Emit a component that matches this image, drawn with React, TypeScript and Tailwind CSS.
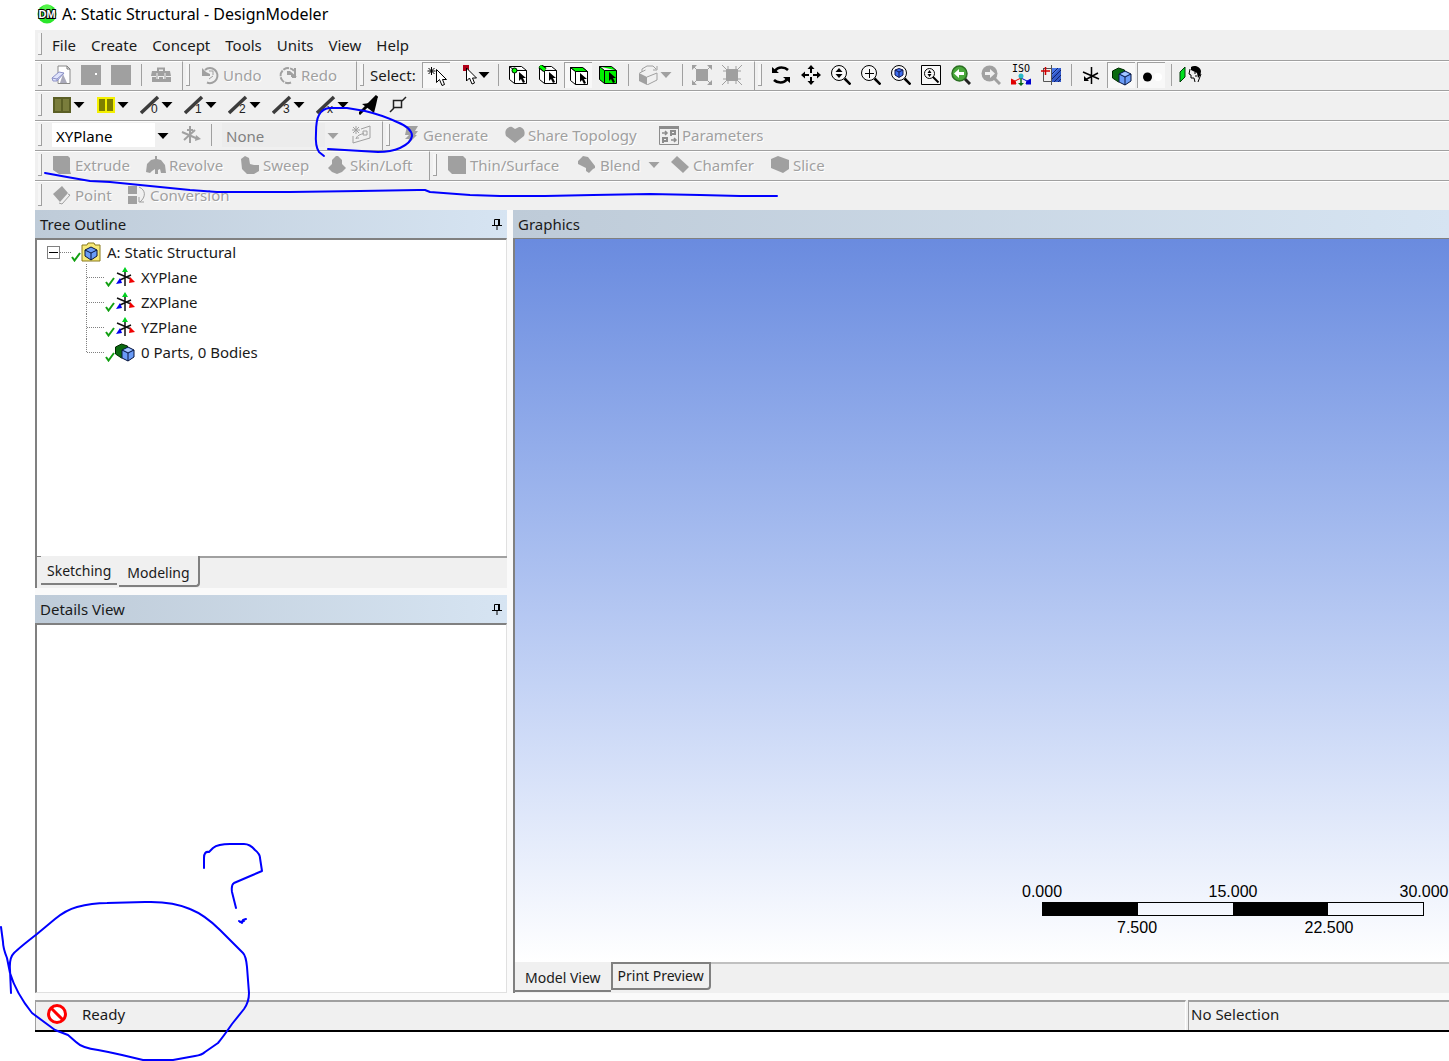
import React, { useState } from "react";

// --- Types ---
type IconProps = { className?: string };
type IconType = React.FC<IconProps>;

type TreeItem = {
  id: string;
  label: string;
  icon: IconType;
};

// --- Icon base ---
const Svg: React.FC<{ children: React.ReactNode; className?: string }> = ({
  children,
  className = "h-5 w-5",
}) => (
  <svg viewBox="0 0 20 20" className={`shrink-0 ${className}`} fill="none" aria-hidden="true">
    {children}
  </svg>
);

const Arrow: React.FC<{ color?: string }> = ({ color = "#000" }) => (
  <svg viewBox="0 0 12 6" className="h-1.5 w-3 shrink-0" aria-hidden="true">
    <path d="M0.5 0h11L6 6z" fill={color} />
  </svg>
);

// --- Standard toolbar icons ---
const LogoIcon: IconType = () => (
  <Svg>
    <circle cx="10" cy="10" r="9.5" fill="#2be62b" />
    <circle cx="10" cy="5" r="5" fill="#7dff6a" opacity="0.5" />
    <text
      x="10"
      y="14"
      textAnchor="middle"
      fontFamily="Liberation Sans, sans-serif"
      fontWeight="bold"
      fontSize="11"
      fill="#fff"
      stroke="#000"
      strokeWidth="2"
      paintOrder="stroke"
    >
      DM
    </text>
  </Svg>
);

const NewIcon: IconType = () => (
  <Svg>
    <path d="M7 1h9l3 3v14.5H7z" fill="#fff" stroke="#8a8a8a" />
    <path d="M16 1v3h3" stroke="#777" />
    <path d="M12 9l4 9H9z" fill="#aab" />
    <path d="M1 13l7-6 5 1-7 8H2z" fill="#dfe3fb" stroke="#8d92c8" />
    <path d="M1 13l5 1 7-6M6 14v2" stroke="#8d92c8" />
  </Svg>
);

const SaveBlockIcon: IconType = () => (
  <Svg>
    <path d="M0 0h20v20H0z" fill="#a0a0a0" />
    <path d="M14 8h2v2h-2z" fill="#fff" />
  </Svg>
);

const BlockIcon: IconType = () => (
  <Svg>
    <path d="M0 0h20v20H0z" fill="#a0a0a0" />
  </Svg>
);

const ToolboxIcon: IconType = () => (
  <Svg>
    <path d="M7 6V3.5h6V6" stroke="#a0a0a0" strokeWidth="2" />
    <path d="M1 6h18l1 5H0zM1 12h4v2h3v-2h4v2h3v-2h5v5H1z" fill="#a0a0a0" />
    <path d="M5 8v6h2V8zM13 8v6h2V8z" fill="#c8c8c8" />
  </Svg>
);

const UndoIcon: IconType = () => (
  <Svg>
    <path d="M5 5a7.5 7.5 0 1 1 2 12.500" stroke="#a0a0a0" strokeWidth="2" />
    <path d="M2 3v8h8V9L6 7z" fill="#a0a0a0" />
    <path d="M9 6h4v4M9 14l4-3" stroke="#a0a0a0" />
  </Svg>
);

const RedoIcon: IconType = () => (
  <Svg>
    <path
      d="M13 17.5a7.5 7.5 0 1 1 3-11.500"
      stroke="#a0a0a0"
      strokeWidth="2"
      strokeDasharray="6 1"
    />
    <path d="M9 6h3l7 6h-6v-2H9z" fill="#a0a0a0" />
    <path d="M17 3v9h-3" stroke="#a0a0a0" strokeWidth="2" />
  </Svg>
);

const SelectNewIcon: IconType = () => (
  <Svg>
    <path d="M4.5 1v8M0.5 5h8M1.5 2l6 6M7.5 2l-6 6" stroke="#000" />
    <path d="M9.5 3.5v13l3-3 2.5 6 2.5-1-2-5h4z" fill="#fff" stroke="#000" />
  </Svg>
);

const SelectModeIcon: IconType = () => (
  <svg viewBox="0 0 14 20" className="h-5 w-3.5 shrink-0" fill="none" aria-hidden="true">
    <path d="M0 0h6v6H0z" fill="#b00018" />
    <path d="M3.5 3v13l3-3 2.5 6 2.5-1-2-5h4z" fill="#fff" stroke="#000" />
  </svg>
);

const cubeFrame = "M1.5 1.5h12l5 4v13h-12l-5-4zM1.5 1.5l5 4h12M6.5 5.5v13";
const blackCursor = "M11 7v9l2-2 2 4 2-1-2-4h3z";

const PickPointIcon: IconType = () => (
  <Svg>
    <path d={cubeFrame} fill="#fff" stroke="#000" />
    <circle cx="6.5" cy="5.5" r="2.5" fill="#0f0" stroke="#000" />
    <path d={blackCursor} fill="#000" />
  </Svg>
);

const PickEdgeIcon: IconType = () => (
  <Svg>
    <path d={cubeFrame} fill="#fff" stroke="#000" />
    <path d="M2 1l5 4" stroke="#000" strokeWidth="5" />
    <path d="M2 1l5 4" stroke="#0f0" strokeWidth="3" />
    <path d={blackCursor} fill="#000" />
  </Svg>
);

const PickFaceIcon: IconType = () => (
  <Svg>
    <path d={cubeFrame} fill="#fff" stroke="#000" />
    <path d="M1.5 1.5h12l5 4h-12z" fill="#00f000" stroke="#000" />
    <path d={blackCursor} fill="#000" />
  </Svg>
);

const PickBodyIcon: IconType = () => (
  <Svg>
    <path d={cubeFrame} fill="#00f000" stroke="#000" />
    <path d={blackCursor} fill="#000" />
  </Svg>
);

const ExtendIcon: IconType = () => (
  <Svg>
    <path d="M0 8l8 4v8l-8-4z" fill="#a0a0a0" />
    <path
      d="M0.5 8l6-3M8 12l10-4v7L8 20M3 7V4l5-3h6l3 3M14 5h4V1"
      stroke="#a0a0a0"
    />
  </Svg>
);

const ExpandIcon: IconType = () => (
  <Svg>
    <path d="M4 4h12v12H4z" fill="#a0a0a0" />
    <path d="M0 5V0h5zM15 0h5v5zM20 15v5h-5zM5 20H0v-5z" fill="#a0a0a0" />
    <path d="M1 1l4 4M19 1l-4 4M19 19l-4-4M1 19l4-4" stroke="#a0a0a0" />
  </Svg>
);

const ShrinkIcon: IconType = () => (
  <Svg>
    <path d="M4 4h12v12H4z" fill="#a0a0a0" />
    <path
      d="M0 0l5 5M20 0l-5 5M20 20l-5-5M0 20l5-5M1 6h5V1M14 1v5h5M19 14h-5v5M6 19v-5H1"
      stroke="#a0a0a0"
    />
  </Svg>
);

const RotateIcon: IconType = () => (
  <Svg>
    <path d="M4 6c3-5 10-4 13-1M16 14c-3 5-10 4-13 1" stroke="#000" strokeWidth="2.5" />
    <path d="M1 2v6h7zM19 18v-6h-7z" fill="#000" />
  </Svg>
);

const PanIcon: IconType = () => (
  <Svg>
    <path d="M10 3v5M10 12v5M3 10h5M12 10h5" stroke="#000" strokeWidth="2" />
    <path
      d="M10 0l3.5 4h-7zM10 20l3.5-4h-7zM0 10l4-3.5v7zM20 10l-4-3.5v7z"
      fill="#000"
    />
  </Svg>
);

const Lens: React.FC<{ children?: React.ReactNode }> = ({ children }) => (
  <Svg>
    <circle cx="8" cy="8" r="7.5" fill="#f8f8f8" stroke="#000" />
    <path d="M13.5 13.5l6 6" stroke="#000" strokeWidth="2.5" />
    {children}
  </Svg>
);

const ZoomIcon: IconType = () => (
  <Lens>
    <path d="M8 3l3.5 4h-7zM8 13l3.5-4h-7z" fill="#000" />
  </Lens>
);

const ZoomBoxIcon: IconType = () => (
  <Lens>
    <path d="M8.5 4v9M4 8.5h9" stroke="#000" />
  </Lens>
);

const ZoomFitIcon: IconType = () => (
  <Lens>
    <path d="M4 5l4-1.5L12 5v5l-4 2.500L4 10z" fill="#3c6cf0" stroke="#101850" />
    <path d="M4 5l4 2 4-2M8 7v5" stroke="#101850" />
  </Lens>
);

const MagnifierIcon: IconType = () => (
  <Svg>
    <path d="M0.5 0.5h19v19H0.5z" fill="#f8f8f8" stroke="#000" />
    <circle cx="8.5" cy="8.5" r="5" stroke="#000" />
    <path d="M12 12l5.500 5.500" stroke="#000" strokeWidth="2" />
    <path d="M8.5 5l2 3h-4zM8.5 12l2-3h-4z" fill="#000" />
  </Svg>
);

const PrevViewIcon: IconType = () => (
  <Svg>
    <path d="M13 13l6 6" stroke="#222" strokeWidth="3" />
    <circle cx="8.5" cy="8.5" r="7.5" fill="#49a83a" stroke="#2b6e22" strokeWidth="1.5" />
    <path d="M3 8.5L8 4v3h5v3H8v3z" fill="#fff" />
  </Svg>
);

const NextViewIcon: IconType = () => (
  <Svg>
    <path d="M13 13l6 6" stroke="#a0a0a0" strokeWidth="3" />
    <circle cx="8.5" cy="8.5" r="8" fill="#a0a0a0" />
    <path d="M14 8.5L9 4v3H4v3h5v3z" fill="#f0f0f0" />
  </Svg>
);

const IsoIcon: IconType = () => (
  <svg viewBox="0 0 20 24" className="h-6 w-5 shrink-0" fill="none" aria-hidden="true">
    <text
      x="10"
      y="9"
      textAnchor="middle"
      fontFamily="DejaVu Sans Mono, monospace"
      fontSize="10"
      fill="#000"
    >
      ISO
    </text>
    <path d="M10 15l-6 3M4 18l-4-2v5h5z" fill="#e00000" stroke="#e00000" />
    <path d="M10 15l6 3M16 18l4-2v5h-5z" fill="#0000d0" stroke="#0000d0" />
    <path d="M10 15v5" stroke="#086a18" strokeWidth="1.5" />
    <path d="M10 23l3-3H7z" fill="#086a18" />
    <circle cx="10" cy="13" r="2.5" fill="#28b8c8" />
  </svg>
);

const PlaneDisplayIcon: IconType = () => (
  <Svg>
    <path d="M10 3h10v14H10z" fill="#4a78e8" />
    <path d="M10 17v-5l9-9h1v14z" fill="#1c3ca8" opacity="0.5" />
    <path d="M11 9l6-6M11 14l9-9M13 17l7-7M17 17l3-3" stroke="#10206a" />
    <path d="M2.5 3v13.5h8M2.5 3.5h8M10.5 0v20" stroke="#555" />
    <path d="M0 6h9M4.5 2v8" stroke="#d00000" strokeWidth="1.5" />
  </Svg>
);

const AxisIcon: IconType = () => (
  <Svg>
    <path d="M10.5 2v17M2 7l16 7M17 8L4 15" stroke="#000" strokeWidth="1.5" />
    <path d="M3 11v5h5z" fill="#000" />
  </Svg>
);

const BodiesIcon: IconType = () => (
  <Svg>
    <path d="M0.5 5l6-3 6 2v8l-6 4-6-4z" fill="#0a6a10" stroke="#002800" />
    <path d="M7 8l6-3 6 3v7l-6 4-6-3z" fill="#6a9cf8" stroke="#06153f" />
    <path d="M9 8l4-2 4 2-4 2z" fill="#a8c8ff" />
    <path d="M7 8l6 3 6-3M13 11v8" stroke="#06153f" />
  </Svg>
);

const DotIcon: IconType = () => (
  <Svg>
    <circle cx="5.5" cy="11" r="4.5" fill="#000" />
    <circle cx="16" cy="11" r="4" fill="#fff" />
  </Svg>
);

const LookAtIcon: IconType = () => (
  <Svg className="h-5 w-6">
    <path d="M-1 7l5-5v10l-5 5z" fill="#00e020" stroke="#003808" />
    <path d="M10 2c3-2 9-1 10 4 0 4-2 6-3 7l-1-5-6-3z" fill="#000" />
    <path d="M9 4l-1 5 2 1v3h3l1 4M20 9l-3 8M13 8h2M14 11h2" stroke="#000" />
  </Svg>
);

// --- Line colour / edge icons ---
const FaceColorIcon: IconType = () => (
  <Svg>
    <path d="M1 2h18v16H1z" fill="#5b5f25" />
    <path d="M3 4h6v12H3zM11 4h6v12h-6z" fill="#7a7d3c" />
  </Svg>
);

const EdgeColorIcon: IconType = () => (
  <Svg>
    <path d="M1 2h18v16H1z" fill="#f4f000" />
    <path d="M3 4h6v12H3zM11 4h6v12h-6z" fill="#7f8000" />
  </Svg>
);

const makeEdgeIcon = (mark: string): IconType => {
  const EdgeIcon: IconType = () => (
    <Svg>
      <path d="M1 18L18 2" stroke="#3c3c3c" strokeWidth="3.5" />
      <text x="11" y="18" fontFamily="Liberation Sans, sans-serif" fontSize="12" fill="#222">
        {mark}
      </text>
    </Svg>
  );
  return EdgeIcon;
};

const Edge0Icon = makeEdgeIcon("0");
const Edge1Icon = makeEdgeIcon("1");
const Edge2Icon = makeEdgeIcon("2");
const Edge3Icon = makeEdgeIcon("3");
const EdgeXIcon = makeEdgeIcon("x");

const ThickEdgeIcon: IconType = () => (
  <Svg>
    <path d="M0 19L18 1" stroke="#000" strokeWidth="3" />
    <path d="M3 9l8-1 8-7-2 9-2 8-5-4z" fill="#000" />
  </Svg>
);

const VertexIcon: IconType = () => (
  <Svg>
    <path d="M1 17l4-4M13 6l4-4" stroke="#222" strokeWidth="1.5" />
    <path d="M4.5 5.5h8v7h-8z" stroke="#222" strokeWidth="1.5" />
  </Svg>
);

// --- Feature icons (disabled) ---
const NewPlaneIcon: IconType = () => (
  <Svg>
    <path d="M9 1v17M1 7l16 7M14 5L3 15M6 5h6" stroke="#a0a0a0" strokeWidth="2" />
    <path d="M15 10l5 4-6 2z" fill="#a0a0a0" />
  </Svg>
);

const NewSketchIcon: IconType = () => (
  <Svg>
    <path
      d="M5 1v8M1 5h8M2 2l6 6M8 2L2 8M10 4l9-3v12L2 18v-7"
      stroke="#a0a0a0"
    />
    <path d="M5 14c1-4 4-4 8-6M12 6h4v4h-4zM5 13h3" stroke="#a0a0a0" />
  </Svg>
);

const GenerateIcon: IconType = () => (
  <Svg>
    <path d="M7 1h11l-3 5h3l-3 4h2l-9 9 1-5H5l4-4H5z" fill="#a0a0a0" />
  </Svg>
);

const ShareIcon: IconType = () => (
  <Svg>
    <path d="M10 18L1 11C-1 6 2 1 7 2l3 2 4-2c4 0 7 4 5 9z" fill="#a0a0a0" />
  </Svg>
);

const ParametersIcon: IconType = () => (
  <Svg>
    <path d="M0.5 1.5h19v18H0.5z" stroke="#8c8c8c" />
    <path d="M0 1h20v3H0z" fill="#8c8c8c" />
    <path d="M3 8h5M6 6l2 2-2 2M12 15h5M15 13l2 2-2 2" stroke="#8c8c8c" strokeWidth="1.5" />
    <path d="M12 11V6h4v3h-4M4 18v-5h4v3H4" stroke="#8c8c8c" strokeWidth="2" />
  </Svg>
);

const ExtrudeIcon: IconType = () => (
  <Svg>
    <path d="M1 1h15l2 2v13l1 3H7l-6-4z" fill="#a0a0a0" />
  </Svg>
);

const RevolveIcon: IconType = () => (
  <Svg>
    <path
      d="M0 17l1-8 4-4 4-1V1h2v3l4 1 4 5 1 8h-5l-1-4-2 1v4h-3v-5l-3 2-2 2z"
      fill="#a0a0a0"
    />
  </Svg>
);

const SweepIcon: IconType = () => (
  <Svg>
    <path d="M1 4l4-3 4 2 1 6 4 1h5v6l-5 3H7l-5-5z" fill="#a0a0a0" />
  </Svg>
);

const LoftIcon: IconType = () => (
  <Svg>
    <path d="M9 1h2l4 4v4l4 4-4 4-5 2-5-2-4-4 4-4V5z" fill="#a0a0a0" />
  </Svg>
);

const ThinIcon: IconType = () => (
  <Svg>
    <path d="M1 1h15l3 3v15H5l-4-4z" fill="#a0a0a0" />
  </Svg>
);

const BlendIcon: IconType = () => (
  <Svg>
    <path d="M1 6l5-5 5 1 7 9v2l-2 1-4 4-3-2v-3L1 9z" fill="#a0a0a0" />
  </Svg>
);

const ChamferIcon: IconType = () => (
  <Svg>
    <path d="M1 7l6-6 12 11-6 6z" fill="#a0a0a0" />
  </Svg>
);

const SliceIcon: IconType = () => (
  <Svg>
    <path d="M1 4l7-3 11 4v9l-6 4-12-5z" fill="#a0a0a0" />
  </Svg>
);

const PointIcon: IconType = () => (
  <Svg>
    <path d="M1 9l9-8 6 7-8 9z" fill="#a0a0a0" />
    <path d="M16 9l2 1-8 9-3-1" stroke="#a0a0a0" />
  </Svg>
);

const ConversionIcon: IconType = () => (
  <Svg>
    <path d="M1 1h9v8H1zM1 11h9v8H1z" fill="#a0a0a0" />
    <path d="M12 2c7 3 7 10 1 15M12 12v5h5" stroke="#a0a0a0" />
  </Svg>
);

// --- Tree icons ---
const CheckIcon: IconType = () => (
  <svg viewBox="0 0 10 10" className="mt-2.5 h-2.5 w-2.5 shrink-0" fill="none" aria-hidden="true">
    <path d="M1 5l2.5 3.5L9 1" stroke="#12a012" strokeWidth="2" />
  </svg>
);

const FolderIcon: IconType = () => (
  <Svg>
    <path d="M1 3h5l1-2h6l1 2h5v16H1z" fill="#f6e978" stroke="#8a7a1c" />
    <path d="M4 8l6-3 6 3v6l-6 4-6-4z" fill="#6a9cf8" stroke="#06153f" />
    <path d="M4 8l6 3 6-3M10 11v7" stroke="#06153f" />
  </Svg>
);

const PlaneIcon: IconType = () => (
  <Svg>
    <path d="M10 3v16M2 6l14 6M16 8L5 13" stroke="#111" strokeWidth="1.5" />
    <path d="M10 0l3 5H7z" fill="#00d020" />
    <path d="M20 15l-6 1 1-6z" fill="#f00000" />
    <path d="M1 17l4-6 2 5z" fill="#0000f0" />
  </Svg>
);

const PinIcon: IconType = () => (
  <svg viewBox="0 0 10 12" className="h-3 w-2.5" fill="none" aria-hidden="true">
    <path d="M2.5 7V1.5h5V7M0 7.5h10M5 8v4" stroke="#000" />
    <path d="M7 1v6" stroke="#000" strokeWidth="2" />
  </svg>
);

const NoEntryIcon: IconType = () => (
  <Svg>
    <circle cx="10" cy="10" r="8.5" fill="#fff" stroke="#f00" strokeWidth="3" />
    <path d="M4 4l12 12" stroke="#f00" strokeWidth="3" />
  </Svg>
);

// --- Toolbar parts ---
const Bar: React.FC<{ children: React.ReactNode; className?: string }> = ({
  children,
  className = "h-[30px]",
}) => (
  <div className={`flex shrink-0 overflow-hidden border-b border-[#a0a0a0] ${className}`}>
    {children}
  </div>
);

const Band: React.FC<{ children: React.ReactNode; last?: boolean }> = ({ children, last }) => (
  <div
    className={`flex shrink-0 items-center border-t border-t-white pb-0.5 ${
      last ? "grow" : "border-r border-r-[#a0a0a0]"
    }`}
  >
    <span className="ml-[3px] mr-1 h-[22px] w-1 shrink-0 border-b border-r border-b-[#a0a0a0] border-r-[#a0a0a0] bg-[#f6f6f6]" />
    {children}
  </div>
);

const Separator: React.FC = () => (
  <span className="flex w-2.5 shrink-0 justify-center">
    <span className="h-[22px] w-px bg-[#a0a0a0]" />
  </span>
);

const IconButton: React.FC<{
  label: string;
  icon: IconType;
  pressed?: boolean;
  disabled?: boolean;
}> = ({ label, icon: Icon, pressed, disabled }) => (
  <button
    type="button"
    title={label}
    aria-label={label}
    aria-pressed={pressed}
    disabled={disabled}
    className={`mx-px flex h-[26px] w-7 shrink-0 items-center justify-center ${
      pressed ? "border-l border-t border-[#a0a0a0] bg-[#f8f8f8]" : ""
    }`}
  >
    <Icon />
  </button>
);

const DropButton: React.FC<{
  label: string;
  icon: IconType;
  disabled?: boolean;
  narrow?: boolean;
}> = ({ label, icon: Icon, disabled, narrow }) => (
  <button
    type="button"
    title={label}
    aria-label={label}
    disabled={disabled}
    className={`flex h-[26px] shrink-0 items-center ${narrow ? "w-[34px] gap-px pl-1" : "w-11 gap-px pl-1.5"}`}
  >
    <Icon />
    <Arrow color={disabled ? "#a0a0a0" : "#000"} />
  </button>
);

const TextButton: React.FC<{
  label: string;
  icon: IconType;
  width: string;
  drop?: boolean;
}> = ({ label, icon: Icon, width, drop }) => (
  <button
    type="button"
    disabled
    className={`flex h-[26px] shrink-0 items-center gap-[3px] whitespace-nowrap pl-1.5 text-[#a0a0a0] [text-shadow:1px_1px_0_#fff] ${width}`}
  >
    <Icon />
    <span>{label}</span>
    {drop && (
      <span className="ml-1">
        <Arrow color="#a0a0a0" />
      </span>
    )}
  </button>
);

const Combo: React.FC<{ label: string; options: string[]; disabled?: boolean }> = ({
  label,
  options,
  disabled,
}) => (
  <div className="relative ml-1.5 h-6 w-[120px] shrink-0">
    <select
      aria-label={label}
      disabled={disabled}
      className={`h-full w-full appearance-none border-r-[17px] border-[#f0f0f0] px-1 pt-0.5 opacity-100 outline-none ${
        disabled ? "bg-[#ececec] text-[#808080]" : "bg-white text-black"
      }`}
    >
      {options.map((option) => (
        <option key={option}>{option}</option>
      ))}
    </select>
    <span className="pointer-events-none absolute right-[3px] top-2.5">
      <Arrow color={disabled ? "#a0a0a0" : "#000"} />
    </span>
  </div>
);

// --- Panels ---
const PanelHeader: React.FC<{ title: string; pin?: boolean }> = ({ title, pin }) => (
  <div className="flex h-7 shrink-0 items-center justify-between bg-linear-to-r from-[#becbd8] to-[#d6e4f2] px-[5px]">
    <h2>{title}</h2>
    {pin && (
      <button type="button" title="Auto Hide" aria-label={`Auto hide ${title}`}>
        <PinIcon />
      </button>
    )}
  </div>
);

const Connector: React.FC<{ last: boolean }> = ({ last }) => (
  <svg viewBox="0 0 19 25" className="h-[25px] w-[19px] shrink-0" aria-hidden="true">
    <path
      d={last ? "M0.5 0v13M1 13.5h18" : "M0.5 0v25M1 13.5h18"}
      stroke="#808080"
      strokeDasharray="1 1"
      fill="none"
    />
  </svg>
);

const treeItems: TreeItem[] = [
  { id: "xy", label: "XYPlane", icon: PlaneIcon },
  { id: "zx", label: "ZXPlane", icon: PlaneIcon },
  { id: "yz", label: "YZPlane", icon: PlaneIcon },
  { id: "parts", label: "0 Parts, 0 Bodies", icon: BodiesIcon },
];

const TreeOutline: React.FC = () => {
  const [open, setOpen] = useState<boolean>(true);

  return (
    <div className="h-[318px] shrink-0 border-l-2 border-r border-t-2 border-l-[#808080] border-r-[#e0e0e0] border-t-[#808080] bg-white">
      <div className="flex h-6 items-center pl-2.5">
        <button
          type="button"
          aria-label="Toggle tree"
          aria-expanded={open}
          onClick={() => setOpen(!open)}
          className="flex h-[13px] w-[13px] items-center justify-center border border-[#808080]"
        >
          <span className="h-px w-[9px] bg-black" />
        </button>
        <span className="w-[11px] border-t border-dotted border-[#808080]" />
        <CheckIcon />
        <FolderIcon />
        <span className="ml-1.5">A: Static Structural</span>
      </div>
      {open && (
        <ul className="pl-[49px]">
          {treeItems.map((item, index) => {
            const Icon = item.icon;
            return (
              <li key={item.id} className="flex h-[25px] items-center">
                <Connector last={index === treeItems.length - 1} />
                <CheckIcon />
                <Icon />
                <span className="ml-1.5">{item.label}</span>
              </li>
            );
          })}
        </ul>
      )}
    </div>
  );
};

// --- Scale ruler ---
const RulerLabels: React.FC<{ labels: string[] }> = ({ labels }) => (
  <div className="flex justify-between">
    {labels.map((label) => (
      <span key={label} className="flex w-0 justify-center">
        {label}
      </span>
    ))}
  </div>
);

const Ruler: React.FC = () => (
  <div className="mr-[25px] w-[382px] font-['Liberation_Sans',sans-serif] text-base leading-5 text-black">
    <RulerLabels labels={["0.000", "15.000", "30.000"]} />
    <div className="flex h-3.5 border border-black">
      <span className="flex-1 bg-black" />
      <span className="flex-1" />
      <span className="flex-1 bg-black" />
      <span className="flex-1" />
    </div>
    <div className="px-[95px] pt-0.5">
      <RulerLabels labels={["7.500", "22.500"]} />
    </div>
  </div>
);

// --- Pen marks over the window ---
const PenMarks: React.FC = () => (
  <svg
    viewBox="0 0 1449 1061"
    className="pointer-events-none absolute left-0 top-0 h-[1061px] w-[1449px]"
    fill="none"
    stroke="#0000ff"
    strokeWidth="2"
    strokeLinecap="round"
    strokeLinejoin="round"
    aria-hidden="true"
  >
    <path d="M324 156L319 152Q315 146 316 133Q316 120 319 115Q323 108 330 108H347L365 111Q382 115 397 122Q412 128 412 136Q411 143 400 148Q391 152 378 152L328 149" />
    <path d="M45 173L67 177L90 181L110 182L130 184L160 187L190 190L217 192H290L360 191L418 190H425L430 192L470 195L500 196H545L593 195L650 194L700 195L740 196H777" />
    <path d="M204 868V858Q204 851 209 852L213 848Q218 844 230 844H244Q250 844 255 850Q260 854 260 858L262 871L248 877L234 883Q231 885 232 892L236 908M239 921L242 923L243 920L246 919M240 922L244 921" />
    <path d="M11 993L10 970Q9 958 14 953Q19 948 37 934L55 919Q66 910 77 907Q92 903 107 903L145 902Q172 901 190 909Q205 915 220 930L243 953Q246 956 247 967L249 993Q249 1002 244 1009L232 1024Q223 1037 218 1043L205 1052Q202 1055 195 1056L173 1060H143L122 1055Q109 1052 98 1050Q82 1048 76 1042L68 1035L55 1030L32 1013Q16 993 10 973L7 958Q3 948 3 942L1 927" />
  </svg>
);

// --- Main App Component ---
export default function App() {
  const menus = ["File", "Create", "Concept", "Tools", "Units", "View", "Help"];

  return (
    <div className="relative flex min-h-screen flex-col overflow-hidden bg-white pb-[29px] pl-[35px] font-['Noto_Sans','Open_Sans',sans-serif] text-[15px] leading-5 text-[#1a1a1a]">
      {/* Title */}
      <header className="flex h-[29px] shrink-0 items-center gap-[5px] pb-0.5 pl-0.5 text-black">
        <LogoIcon />
        <h1 className="text-base leading-5">A: Static Structural - DesignModeler</h1>
      </header>

      {/* Toolbars */}
      <div className="flex flex-col bg-[#f0f0f0]">
        <Bar className="h-8">
          <Band last>
            <nav className="flex gap-[15px] pl-1.5 pt-0.5">
              {menus.map((menu) => (
                <button key={menu} type="button">
                  {menu}
                </button>
              ))}
            </nav>
          </Band>
        </Bar>

        <Bar>
          <Band>
            <IconButton label="New" icon={NewIcon} />
            <IconButton label="Save" icon={SaveBlockIcon} disabled />
            <IconButton label="Export" icon={BlockIcon} disabled />
            <Separator />
            <IconButton label="Options" icon={ToolboxIcon} disabled />
            <span className="w-1.5" />
          </Band>
          <Band>
            <TextButton label="Undo" icon={UndoIcon} width="w-[78px]" />
            <TextButton label="Redo" icon={RedoIcon} width="w-[84px]" />
          </Band>
          <Band>
            <span className="w-[53px] pl-0.5">Select:</span>
            <IconButton label="New Selection" icon={SelectNewIcon} pressed />
            <span className="w-2" />
            <DropButton label="Select Mode" icon={SelectModeIcon} narrow />
            <Separator />
            <IconButton label="Points" icon={PickPointIcon} />
            <IconButton label="Edges" icon={PickEdgeIcon} />
            <IconButton label="Faces" icon={PickFaceIcon} pressed />
            <IconButton label="Bodies" icon={PickBodyIcon} />
            <Separator />
            <DropButton label="Extend Selection" icon={ExtendIcon} disabled />
            <Separator />
            <IconButton label="Expand" icon={ExpandIcon} disabled />
            <IconButton label="Shrink" icon={ShrinkIcon} disabled />
            <span className="w-[7px]" />
          </Band>
          <Band last>
            <IconButton label="Rotate" icon={RotateIcon} />
            <IconButton label="Pan" icon={PanIcon} />
            <IconButton label="Zoom" icon={ZoomIcon} />
            <IconButton label="Box Zoom" icon={ZoomBoxIcon} />
            <IconButton label="Zoom to Fit" icon={ZoomFitIcon} />
            <IconButton label="Magnifier Window" icon={MagnifierIcon} />
            <IconButton label="Previous View" icon={PrevViewIcon} />
            <IconButton label="Next View" icon={NextViewIcon} disabled />
            <IconButton label="Isometric View" icon={IsoIcon} />
            <IconButton label="Display Plane" icon={PlaneDisplayIcon} />
            <Separator />
            <IconButton label="Axes" icon={AxisIcon} />
            <IconButton label="Display Model" icon={BodiesIcon} pressed />
            <IconButton label="Display Points" icon={DotIcon} pressed />
            <Separator />
            <IconButton label="Look At" icon={LookAtIcon} />
          </Band>
        </Bar>

        <Bar>
          <Band last>
            <DropButton label="Face Color" icon={FaceColorIcon} />
            <DropButton label="Edge Color" icon={EdgeColorIcon} />
            <DropButton label="Free Edges" icon={Edge0Icon} />
            <DropButton label="Single Edges" icon={Edge1Icon} />
            <DropButton label="Double Edges" icon={Edge2Icon} />
            <DropButton label="Triple Edges" icon={Edge3Icon} />
            <DropButton label="Multiple Edges" icon={EdgeXIcon} />
            <IconButton label="Edge Directions" icon={ThickEdgeIcon} />
            <IconButton label="Vertices" icon={VertexIcon} />
          </Band>
        </Bar>

        <Bar>
          <Band>
            <Combo label="Active plane" options={["XYPlane", "ZXPlane", "YZPlane"]} />
            <span className="w-1" />
            <IconButton label="New Plane" icon={NewPlaneIcon} disabled />
            <Separator />
            <Combo label="Active sketch" options={["None"]} disabled />
            <span className="w-1" />
            <IconButton label="New Sketch" icon={NewSketchIcon} disabled />
            <span className="w-1.5" />
          </Band>
          <Band last>
            <TextButton label="Generate" icon={GenerateIcon} width="w-[105px]" />
            <TextButton label="Share Topology" icon={ShareIcon} width="w-[154px]" />
            <TextButton label="Parameters" icon={ParametersIcon} width="w-[120px]" />
          </Band>
        </Bar>

        <Bar>
          <Band>
            <TextButton label="Extrude" icon={ExtrudeIcon} width="w-[94px]" />
            <TextButton label="Revolve" icon={RevolveIcon} width="w-[94px]" />
            <TextButton label="Sweep" icon={SweepIcon} width="w-[87px]" />
            <TextButton label="Skin/Loft" icon={LoftIcon} width="w-[108px]" />
          </Band>
          <Band last>
            <TextButton label="Thin/Surface" icon={ThinIcon} width="w-[130px]" />
            <TextButton label="Blend" icon={BlendIcon} width="w-[93px]" drop />
            <TextButton label="Chamfer" icon={ChamferIcon} width="w-[100px]" />
            <TextButton label="Slice" icon={SliceIcon} width="w-[70px]" />
          </Band>
        </Bar>

        <div className="flex h-[29px]">
          <Band last>
            <TextButton label="Point" icon={PointIcon} width="w-[75px]" />
            <TextButton label="Conversion" icon={ConversionIcon} width="w-[120px]" />
          </Band>
        </div>
      </div>

      {/* Workspace */}
      <main className="flex flex-1 gap-1.5 bg-[#fafafa] pb-[7px]">
        <div className="flex w-[472px] shrink-0 flex-col">
          <section className="flex flex-col">
            <PanelHeader title="Tree Outline" pin />
            <TreeOutline />
            <div className="flex h-8 items-start border-l-2 border-[#808080] bg-[#f0f0f0] text-sm">
              <span className="w-1 border-t border-[#808080]" />
              <button type="button" className="h-[29px] border-b-2 border-[#808080] px-1.5 pt-0.5">
                Sketching
              </button>
              <button
                type="button"
                className="ml-0.5 h-[31px] rounded-br-sm border-b-2 border-r-2 border-[#808080] px-2 pt-1"
              >
                Modeling
              </button>
              <span className="flex-1 border-t-2 border-[#a0a0a0]" />
            </div>
          </section>

          <section className="mt-[7px] flex flex-1 flex-col">
            <PanelHeader title="Details View" pin />
            <div className="flex-1 border-b border-l-2 border-r border-t-2 border-b-[#e0e0e0] border-l-[#808080] border-r-[#e0e0e0] border-t-[#808080] bg-white" />
          </section>
        </div>

        <section className="flex min-w-0 flex-1 flex-col">
          <PanelHeader title="Graphics" />
          <div className="flex flex-1 flex-col border-l-2 border-t border-[#808080]">
            <div className="flex flex-1 flex-col items-end justify-end bg-linear-to-b from-[#6a8bdf] to-[#ffffff] pb-6">
              <Ruler />
            </div>
            <div className="flex h-[31px] items-start bg-[#f0f0f0] text-sm">
              <button
                type="button"
                className="h-[30px] border-b-2 border-[#808080] px-2.5 pt-1"
              >
                Model View
              </button>
              <button
                type="button"
                className="h-7 rounded-br-sm border-2 border-[#808080] px-[5px]"
              >
                Print Preview
              </button>
              <span className="flex-1 border-t-2 border-[#c0c0c0]" />
            </div>
          </div>
        </section>
      </main>

      {/* Status bar */}
      <footer className="flex h-8 shrink-0 gap-0.5 border-b-2 border-black bg-[#f0f0f0]">
        <div className="flex flex-1 items-center gap-[15px] border-l border-r border-t-2 border-l-[#a0a0a0] border-r-white border-t-[#a0a0a0] pb-1 pl-[11px]">
          <NoEntryIcon />
          <span>Ready</span>
        </div>
        <div className="flex w-[261px] items-center border-l border-t-2 border-[#a0a0a0] pb-1 pl-0.5">
          No Selection
        </div>
      </footer>

      <PenMarks />
    </div>
  );
}
